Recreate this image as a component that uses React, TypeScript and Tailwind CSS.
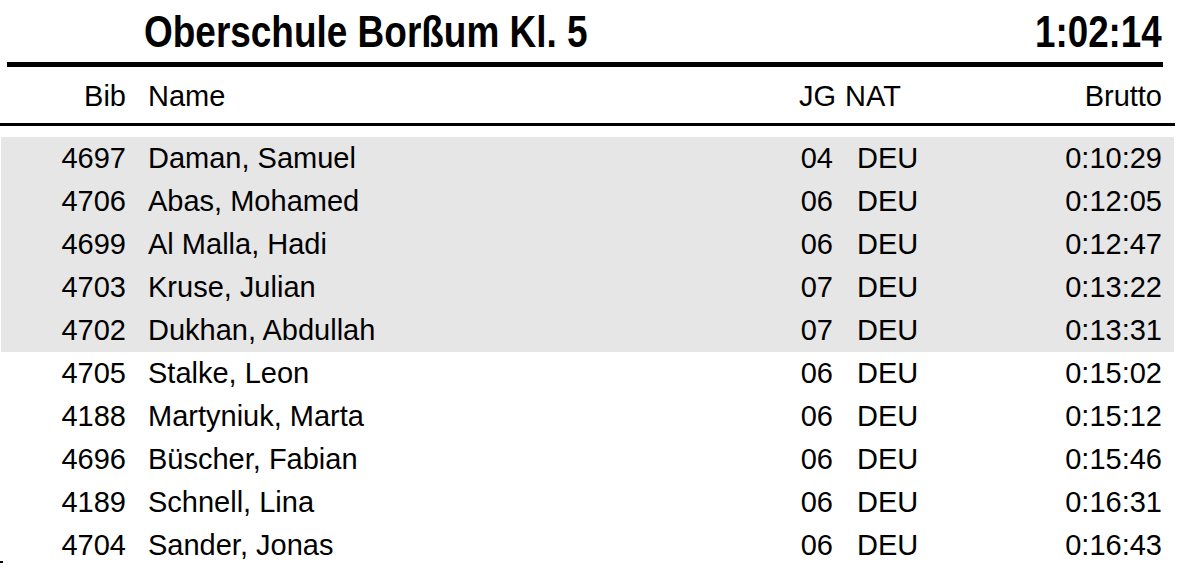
import React from 'react';

type Row = { bib: string; name: string; jg: string; nat: string; time: string; shaded: boolean };

const rows: Row[] = [
  { bib: '4697', name: 'Daman, Samuel', jg: '04', nat: 'DEU', time: '0:10:29', shaded: true },
  { bib: '4706', name: 'Abas, Mohamed', jg: '06', nat: 'DEU', time: '0:12:05', shaded: true },
  { bib: '4699', name: 'Al Malla, Hadi', jg: '06', nat: 'DEU', time: '0:12:47', shaded: true },
  { bib: '4703', name: 'Kruse, Julian', jg: '07', nat: 'DEU', time: '0:13:22', shaded: true },
  { bib: '4702', name: 'Dukhan, Abdullah', jg: '07', nat: 'DEU', time: '0:13:31', shaded: true },
  { bib: '4705', name: 'Stalke, Leon', jg: '06', nat: 'DEU', time: '0:15:02', shaded: false },
  { bib: '4188', name: 'Martyniuk, Marta', jg: '06', nat: 'DEU', time: '0:15:12', shaded: false },
  { bib: '4696', name: 'Büscher, Fabian', jg: '06', nat: 'DEU', time: '0:15:46', shaded: false },
  { bib: '4189', name: 'Schnell, Lina', jg: '06', nat: 'DEU', time: '0:16:31', shaded: false },
  { bib: '4704', name: 'Sander, Jonas', jg: '06', nat: 'DEU', time: '0:16:43', shaded: false },
];

export default function App() {
  return (
    <div className="w-[1177px] h-[587px] bg-white text-black overflow-hidden font-['Liberation_Sans',Arial,sans-serif]">
      {/* title - condensed bold like the printed list */}
      <div className="flex items-start justify-between h-[62px] pl-[144px] pr-[15px] pt-[10px]">
        <span className="block whitespace-nowrap text-[44px] leading-none font-bold scale-x-[0.84] origin-left">
          Oberschule Borßum Kl. 5
        </span>
        <span className="block whitespace-nowrap text-[44px] leading-none font-bold scale-x-[0.835] origin-right">
          1:02:14
        </span>
      </div>
      <div className="ml-[7px] w-[1156px] h-[5px] bg-black" />

      {/* column headings */}
      <div className="flex h-[56px] pt-[15px] text-[29px] leading-[29px]">
        <div className="w-[126px] text-right">Bib</div>
        <div className="w-[656px] pl-[22px]">Name</div>
        <div className="w-[54px] text-right">JG</div>
        <div className="pl-[9px] w-[120px]">NAT</div>
        <div className="flex-1 text-right pr-[15px]">Brutto</div>
      </div>
      <div className="w-[1175px] h-[3px] bg-black" />

      {/* results */}
      <div className="mt-[11px] ml-px w-[1173px]">
        {rows.map((r, i) => (
          <div
            key={r.bib}
            className={`relative flex h-[43px] text-[29px] leading-[43px] ${r.shaded ? 'bg-[#e6e6e6]' : ''}`}
          >
            <div className="w-[125px] text-right">{r.bib}</div>
            <div className="w-[653px] pl-[22px]">{r.name}</div>
            <div className="w-[54px] text-right">{r.jg}</div>
            <div className="w-[120px] pl-[24px]">{r.nat}</div>
            <div className="flex-1 text-right pr-[12px]">{r.time}</div>
            {i === rows.length - 1 && (
              <span className="absolute -left-px top-[37px] w-[3px] h-[2px] bg-black" />
            )}
          </div>
        ))}
      </div>
    </div>
  );
}
